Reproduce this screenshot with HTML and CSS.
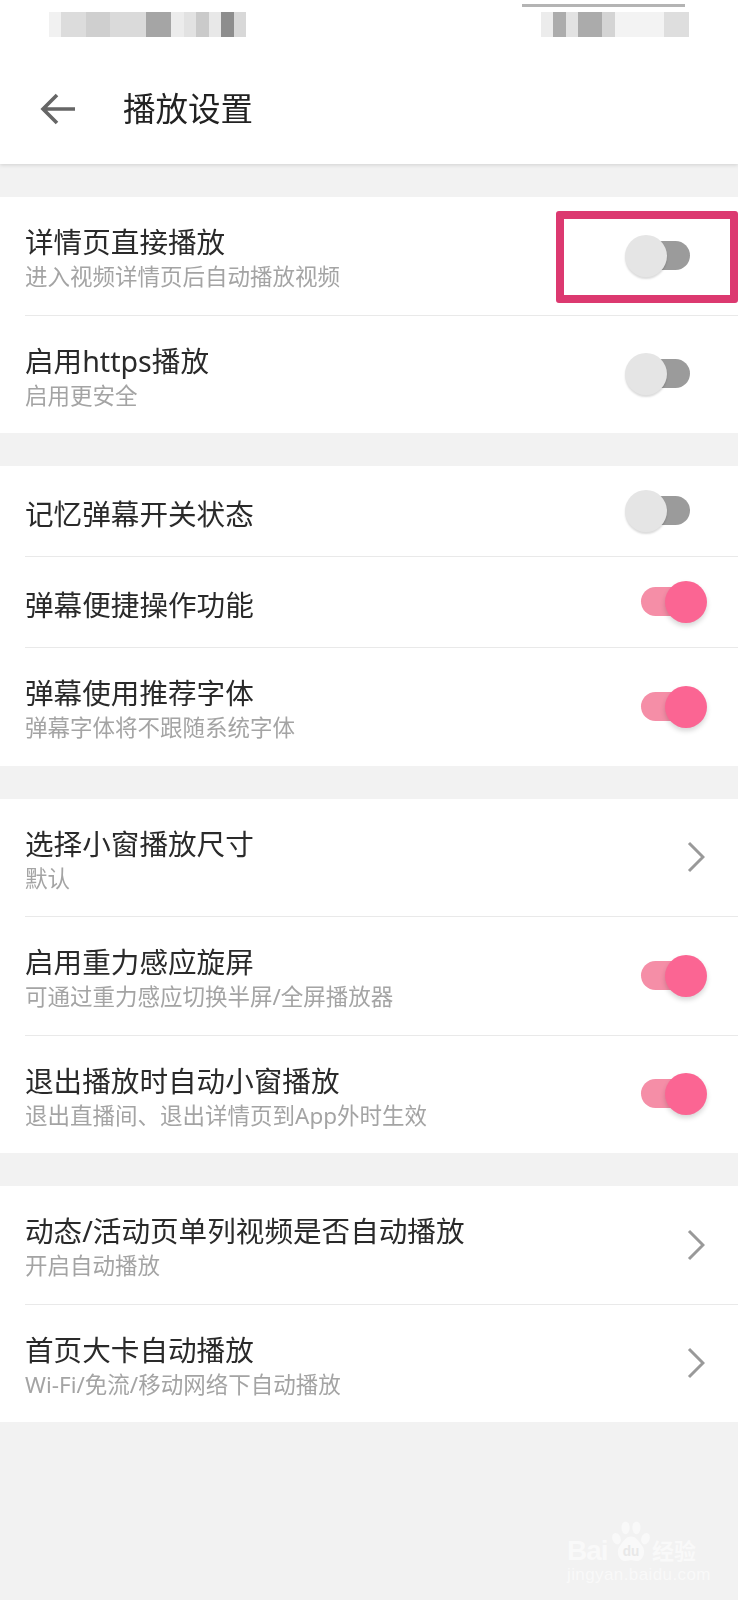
FILE: index.html

```html
<!DOCTYPE html>
<html lang="zh-CN">
<head>
  <meta charset="UTF-8" />
  <title>播放设置</title>
  <link rel="stylesheet" href="styles.css">
</head>
<body>

  <header class="header">
    <div class="status">
      <div class="blur-left"></div>
      <div class="status-right">
        <div class="blur-line"></div>
        <div class="blur-right"></div>
      </div>
    </div>
    <div class="toolbar">
      <svg class="back" width="36" height="32" viewBox="0 0 36 32">
        <path d="M35 16H3M17 2L3 16l14 14" fill="none" stroke="#666" stroke-width="3.6"/>
      </svg>
      <h1 class="page-title">播放设置</h1>
    </div>
  </header>

  <section class="group">
    <div class="row tall">
      <div class="text">
        <div class="name">详情页直接播放</div>
        <div class="desc">进入视频详情页后自动播放视频</div>
      </div>
      <div class="switch"></div>
      <div class="mark"></div>
    </div>
    <div class="row tall">
      <div class="text">
        <div class="name">启用https播放</div>
        <div class="desc">启用更安全</div>
      </div>
      <div class="switch"></div>
    </div>
  </section>

  <section class="group">
    <div class="row">
      <div class="text"><div class="name">记忆弹幕开关状态</div></div>
      <div class="switch"></div>
    </div>
    <div class="row">
      <div class="text"><div class="name">弹幕便捷操作功能</div></div>
      <div class="switch on"></div>
    </div>
    <div class="row tall">
      <div class="text">
        <div class="name">弹幕使用推荐字体</div>
        <div class="desc">弹幕字体将不跟随系统字体</div>
      </div>
      <div class="switch on"></div>
    </div>
  </section>

  <section class="group">
    <div class="row tall">
      <div class="text">
        <div class="name">选择小窗播放尺寸</div>
        <div class="desc">默认</div>
      </div>
      <svg class="chevron" width="18" height="32" viewBox="0 0 18 32">
        <path d="M2 2l14 14L2 30" fill="none" stroke="#999" stroke-width="3"/>
      </svg>
    </div>
    <div class="row tall">
      <div class="text">
        <div class="name">启用重力感应旋屏</div>
        <div class="desc">可通过重力感应切换半屏/全屏播放器</div>
      </div>
      <div class="switch on"></div>
    </div>
    <div class="row tall">
      <div class="text">
        <div class="name">退出播放时自动小窗播放</div>
        <div class="desc">退出直播间、退出详情页到App外时生效</div>
      </div>
      <div class="switch on"></div>
    </div>
  </section>

  <section class="group">
    <div class="row tall">
      <div class="text">
        <div class="name">动态/活动页单列视频是否自动播放</div>
        <div class="desc">开启自动播放</div>
      </div>
      <svg class="chevron" width="18" height="32" viewBox="0 0 18 32">
        <path d="M2 2l14 14L2 30" fill="none" stroke="#999" stroke-width="3"/>
      </svg>
    </div>
    <div class="row tall">
      <div class="text">
        <div class="name">首页大卡自动播放</div>
        <div class="desc">Wi-Fi/免流/移动网络下自动播放</div>
      </div>
      <svg class="chevron" width="18" height="32" viewBox="0 0 18 32">
        <path d="M2 2l14 14L2 30" fill="none" stroke="#999" stroke-width="3"/>
      </svg>
    </div>
  </section>

  <div class="watermark">
    <div class="wm-logo">
      <span class="wm-bai">Bai</span>
      <svg class="wm-paw" width="38" height="43" viewBox="0 0 42 44" preserveAspectRatio="none">
        <g fill="#f9f9f9">
          <ellipse cx="5" cy="19" rx="4.5" ry="6" transform="rotate(-25 5 19)"/>
          <ellipse cx="15" cy="8" rx="4.5" ry="6.5"/>
          <ellipse cx="27" cy="8" rx="4.5" ry="6.5"/>
          <ellipse cx="37" cy="19" rx="4.5" ry="6" transform="rotate(25 37 19)"/>
          <path d="M21 17c6 0 8 5 12 9 5 5 2 16-6 16-3 0-4-1-6-1s-3 1-6 1c-8 0-11-11-6-16 4-4 6-9 12-9z"/>
        </g>
        <text x="21" y="37" text-anchor="middle" class="wm-du">du</text>
      </svg>
      <span class="wm-cn">经验</span>
    </div>
    <div class="wm-url">jingyan.baidu.com</div>
  </div>

</body>
</html>
```

FILE: styles.css

```css
html, body { margin: 0; padding: 0; }
body {
  position: relative;
  height: 1600px;
  overflow: hidden;
  background: #f2f2f2;
  font-family: "Noto Sans", "Noto Sans CJK SC", sans-serif;
}

.header { height: 164px; background: #fff; box-shadow: 0 1px 4px rgba(0,0,0,.14); }
.status { display: flex; justify-content: space-between; height: 50px; padding: 4px 49px 0 49px; box-sizing: border-box; }
.blur-left {
  width: 197px; height: 25px; margin-top: 8px;
  filter: blur(.7px);
  background: linear-gradient(90deg, #f1f1f1 0 12px, #dcdcdc 12px 37px, #cfcfcf 37px 61px, #dadada 61px 97px, #a5a5a5 97px 122px, #ececec 122px 135px, #e2e2e2 135px 147px, #cacaca 147px 160px, #e8e8e8 160px 172px, #8d8d8d 172px 185px, #d8d8d8 185px 197px);
}
.status-right { display: flex; flex-direction: column; align-items: flex-end; }
.blur-line { width: 163px; height: 3px; margin-right: 4px; background: #b4b4b4; filter: blur(.7px); }
.blur-right {
  width: 148px; height: 25px; margin-top: 5px;
  filter: blur(.7px);
  background: linear-gradient(90deg, #ececec 0 12px, #acacac 12px 25px, #e2e2e2 25px 37px, #ababab 37px 61px, #d4d4d4 61px 74px, #f3f3f3 74px 123px, #dedede 123px 148px);
}
.toolbar { display: flex; align-items: center; height: 114px; padding: 3px 0 0 40px; box-sizing: border-box; }
.back { flex: none; }
.page-title { margin: 0 0 0 47px; font-size: 32.5px; font-weight: 400; line-height: 40px; color: #222; filter: blur(.3px); }

.group { margin-top: 33px; background: #fff; }
.row {
  position: relative;
  display: flex;
  align-items: center;
  justify-content: space-between;
  height: 90px;
  margin-left: 25px;
  padding-right: 31px;
  border-bottom: 1px solid #e9e9e9;
}
.row.tall { height: 117.5px; }
.row:last-child { border-bottom: none; }

.text { padding-top: 5px; filter: blur(.3px); }
.name { font-size: 28.6px; line-height: 36px; color: #2a2a2a; }
.desc { margin-top: 2px; font-size: 22.5px; line-height: 30px; color: #a4a4a4; }

.switch { position: relative; flex: none; width: 83px; height: 42px; }
.switch::before {
  content: "";
  position: absolute; left: 17px; right: 17px; top: 6px; height: 29px;
  border-radius: 15px;
  background: #9b9b9b;
}
.switch::after {
  content: "";
  position: absolute; left: 1px; top: 0; width: 42px; height: 42px;
  border-radius: 50%;
  background: #e5e5e5;
  box-shadow: 0 2px 2px rgba(0,0,0,.14);
}
.switch.on::before { background: #f58ea7; }
.switch.on::after { left: 41px; background: #fb6593; box-shadow: 0 3px 5px rgba(0,0,0,.16); }

.chevron { flex: none; margin-right: 2px; }

.mark {
  position: absolute; top: 14px; left: 531px; right: 0; height: 92px;
  box-sizing: border-box;
  border: 8px solid #dc3970;
  border-radius: 3px;
}

.watermark { position: absolute; left: 567px; top: 1520px; width: 134px; color: #f9f9f9; }
.wm-logo { display: flex; align-items: flex-end; height: 43px; }
.wm-bai { width: 45px; font: 700 28px/24px "Liberation Sans", sans-serif; letter-spacing: -1px; }
.wm-paw { flex: none; }
.wm-du { font: 700 15px "Liberation Sans", sans-serif; fill: #e8e8e8; }
.wm-cn { margin-left: 2px; font-size: 22px; line-height: 26px; font-weight: 700; white-space: nowrap; }
.wm-url { margin-top: 3px; font: 400 17px/18px "Liberation Sans", sans-serif; letter-spacing: .4px; white-space: nowrap; }
```
